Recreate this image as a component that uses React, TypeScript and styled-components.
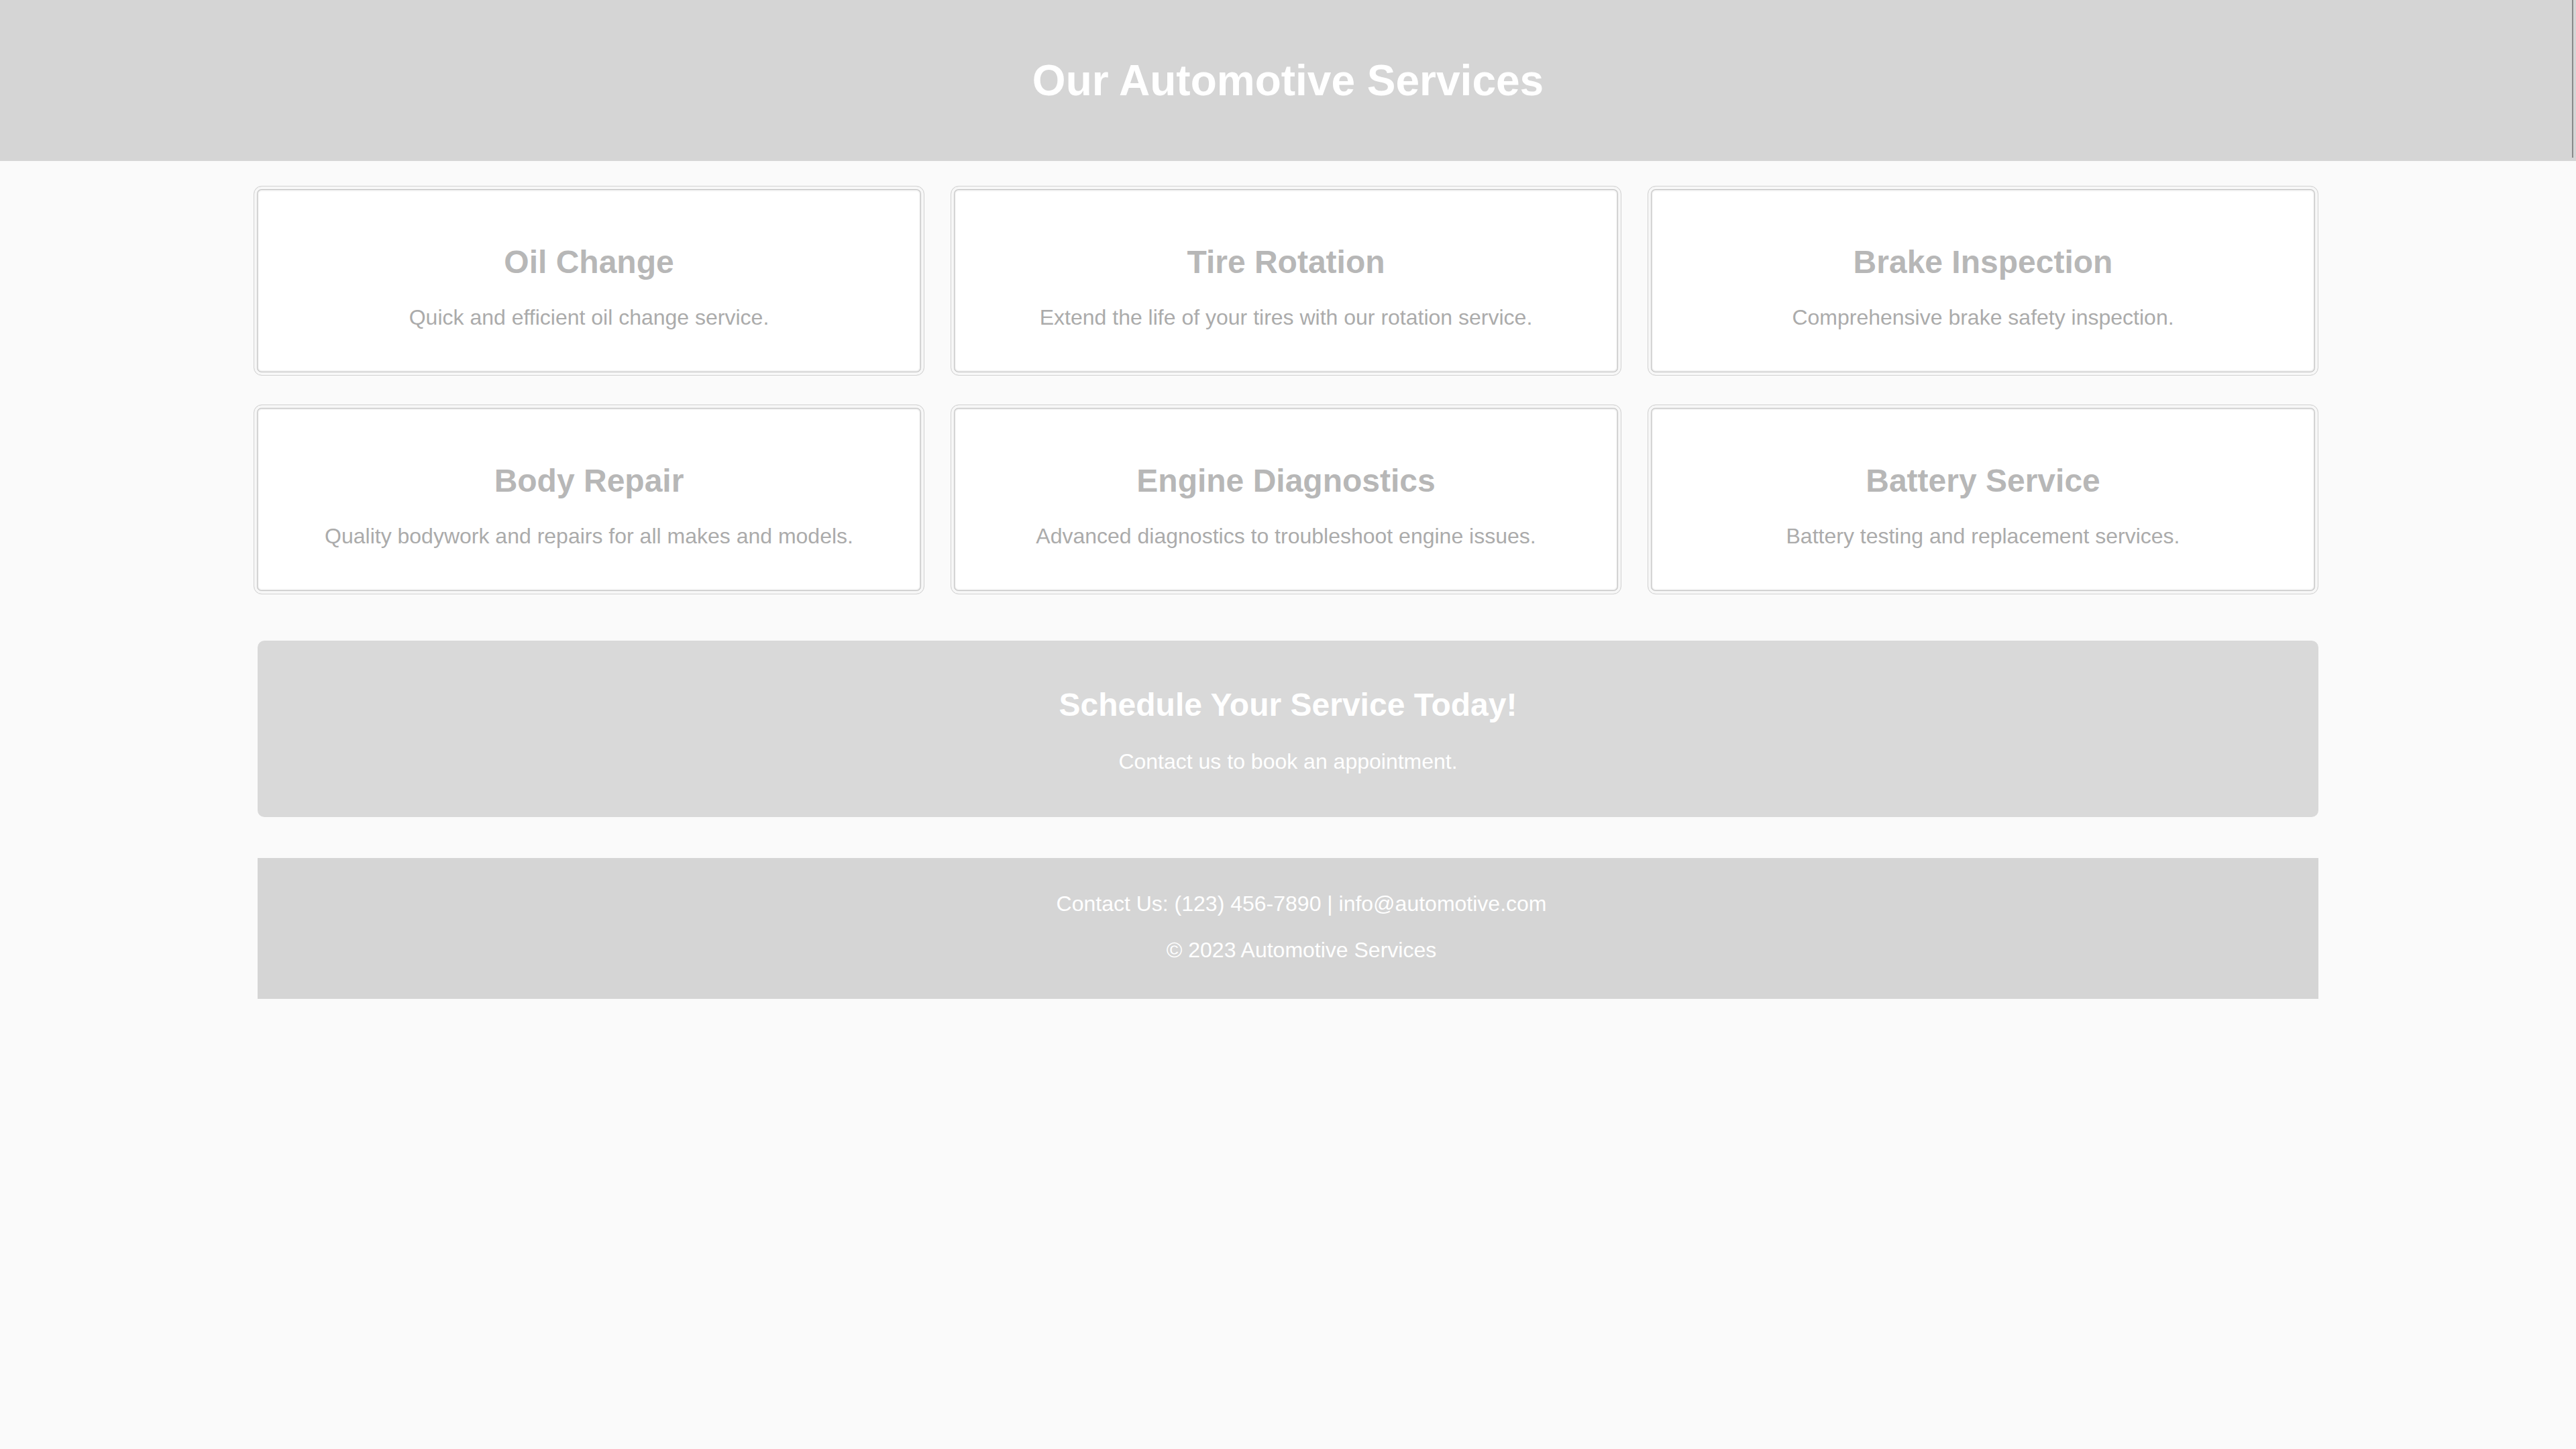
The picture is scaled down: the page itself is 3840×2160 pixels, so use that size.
import React from "react";
import styled, { createGlobalStyle } from "styled-components";

const GlobalStyle = createGlobalStyle`
  html, body {
    margin: 0;
    padding: 0;
    background: #fafafa;
    font-family: "Liberation Sans", Arial, sans-serif;
  }
  * { box-sizing: border-box; }
`;

const Page = styled.div`
  min-height: 2160px;
  background: #fafafa;
`;

const Header = styled.header`
  position: relative;
  height: 240px;
  background: #d5d5d5;
  display: flex;
  align-items: center;
  justify-content: center;
  &::after {
    content: "";
    position: absolute;
    right: 4px;
    top: 0;
    bottom: 5px;
    width: 2px;
    background: #8a8a8a;
  }
`;

const Title = styled.h1`
  margin: 0;
  font-size: 64px;
  line-height: 74px;
  font-weight: 700;
  color: #ffffff;
`;

const Container = styled.main`
  width: 3072px;
  margin: 0 auto;
  padding-top: 37px;
  display: flex;
  flex-direction: column;
`;

const Grid = styled.section`
  display: grid;
  grid-template-columns: repeat(3, 1fr);
  gap: 43px 39px;
  margin: 0 0 0 -6px;
  width: 3078px;
`;

const Card = styled.article`
  height: 283px;
  background: #ffffff;
  border: 1px solid #d2d2d2;
  border-radius: 12px;
  box-shadow: inset 0 0 0 4px #f7f7f7, inset 0 0 0 5px #bfbfbf,
    inset 0 0 0 7px #f0f0f0;
  padding: 85px 40px 0;
  text-align: center;
`;

const CardTitle = styled.h3`
  margin: 0 0 37px;
  font-size: 48px;
  line-height: 55px;
  font-weight: 700;
  color: #b7b7b7;
`;

const CardText = styled.p`
  margin: 0;
  font-size: 32px;
  line-height: 37px;
  color: #ababab;
`;

const Cta = styled.section`
  margin-top: 69px;
  height: 263px;
  background: #d9d9d9;
  border-radius: 10px;
  padding: 68px 40px 0;
  text-align: center;
`;

const CtaTitle = styled.h2`
  margin: 0 0 39px;
  font-size: 48px;
  line-height: 55px;
  font-weight: 700;
  color: #ffffff;
`;

const CtaText = styled.p`
  margin: 0;
  font-size: 32px;
  line-height: 37px;
  color: #ffffff;
`;

const Footer = styled.footer`
  margin-top: 61px;
  height: 210px;
  background: #d5d5d5;
  padding: 50px 0 0 40px;
  display: flex;
  flex-direction: column;
  align-items: center;
  gap: 32px;
`;

const FooterLine = styled.p`
  margin: 0;
  font-size: 32px;
  line-height: 37px;
  color: #ffffff;
`;

const services = [
  { title: "Oil Change", text: "Quick and efficient oil change service." },
  { title: "Tire Rotation", text: "Extend the life of your tires with our rotation service." },
  { title: "Brake Inspection", text: "Comprehensive brake safety inspection." },
  { title: "Body Repair", text: "Quality bodywork and repairs for all makes and models." },
  { title: "Engine Diagnostics", text: "Advanced diagnostics to troubleshoot engine issues." },
  { title: "Battery Service", text: "Battery testing and replacement services." },
];

export default function App() {
  return (
    <Page>
      <GlobalStyle />
      <Header>
        <Title>Our Automotive Services</Title>
      </Header>
      <Container>
        <Grid>
          {services.map((s) => (
            <Card key={s.title}>
              <CardTitle>{s.title}</CardTitle>
              <CardText>{s.text}</CardText>
            </Card>
          ))}
        </Grid>
        <Cta>
          <CtaTitle>Schedule Your Service Today!</CtaTitle>
          <CtaText>Contact us to book an appointment.</CtaText>
        </Cta>
        <Footer>
          <FooterLine>Contact Us: (123) 456-7890 | info@automotive.com</FooterLine>
          <FooterLine>© 2023 Automotive Services</FooterLine>
        </Footer>
      </Container>
    </Page>
  );
}
